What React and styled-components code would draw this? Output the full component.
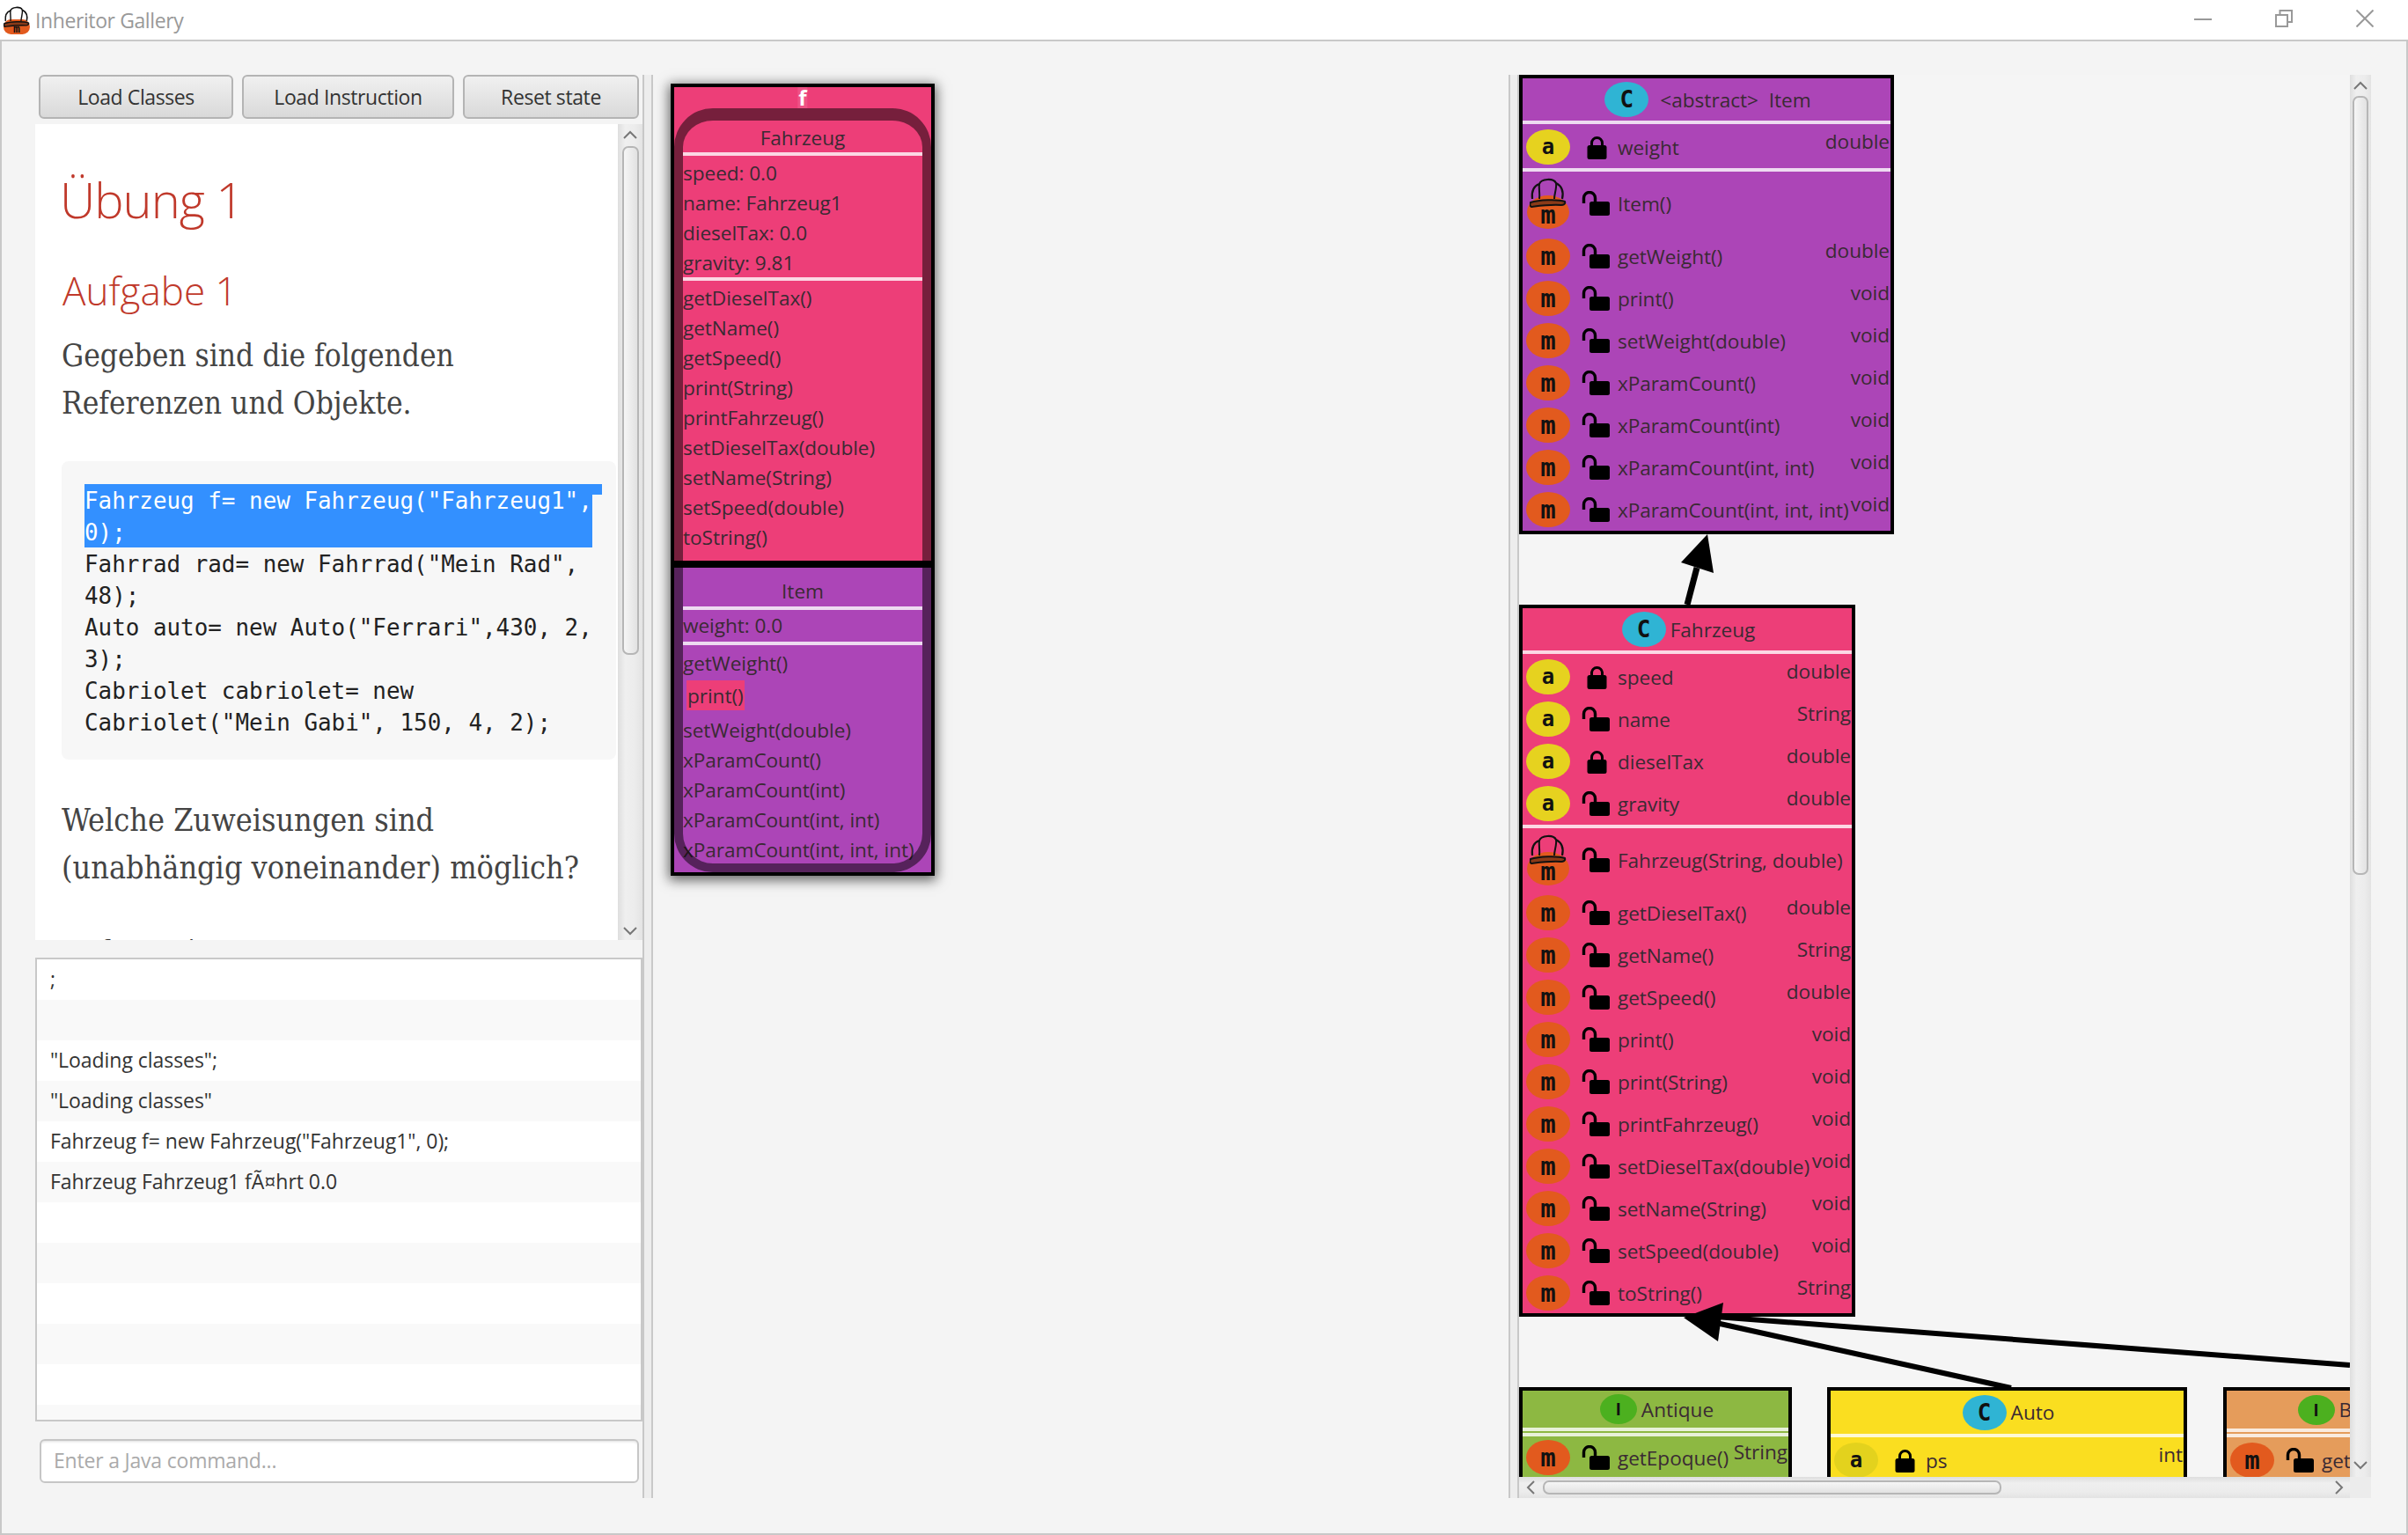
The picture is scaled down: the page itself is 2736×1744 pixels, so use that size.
import React from "react";
import styled, { createGlobalStyle } from "styled-components";

const UI = `"Open Sans", "Noto Sans", sans-serif`;

const Global = createGlobalStyle`
  html, body { margin: 0; padding: 0; background: #f4f4f4; }
  * { box-sizing: border-box; }
`;

const Win = styled.div`
  width: 2736px; height: 1744px; overflow: hidden; display: flex; flex-direction: column;
  background: #f4f4f4; font-family: ${UI}; color: #333;
`;
const TitleBar = styled.div`
  height: 47px; flex: none; background: #fff; border-bottom: 2px solid #c8c8c8;
  display: flex; align-items: center; padding-left: 4px; position: relative;
`;
const AppIcon = styled.span`
  position: relative; display: block; width: 30px; height: 30px; margin-top: 2px; flex: none;
`;
const AppIconBody = styled.span`
  position: absolute; left: 0; right: 0; bottom: 0; height: 17px; background: #e25a1e; border-radius: 9px;
  display: flex; align-items: center; justify-content: center;
  font: bold 13px "DejaVu Sans Mono", monospace; color: #111; padding-top: 4px;
`;
const AppHat = styled.svg`
  position: absolute; left: 0; top: -2px; width: 30px; height: 24px;
`;
const TitleText = styled.span`
  margin-left: 6px; font-size: 23px; color: #999; letter-spacing: -0.4px; line-height: 1; margin-top: 1px;
`;
const WinButtons = styled.div`
  margin-left: auto; display: flex; align-items: center; gap: 72px; padding-right: 39px; height: 100%;
`;
const WinIcon = styled.svg`
  width: 20px; height: 20px; display: block; fill: none; stroke: #999; stroke-width: 2; margin-top: -3px;
`;

const Main = styled.div`
  flex: 1; display: flex; background: #f4f4f4; border: solid #c8c8c8; border-width: 0 2px 2px 2px;
  padding: 38px 40px 40px 38px;
`;
const LeftCol = styled.div`
  width: 690px; flex: none; display: flex; flex-direction: column;
`;
const Buttons = styled.div`
  display: flex; gap: 10px; padding: 0 4px 0 4px; height: 50px; flex: none;
`;
const Btn = styled.button`
  width: ${p => p.$w}px; height: 50px; flex: none; border: 2px solid #b4b4b4; border-radius: 6px;
  background: linear-gradient(#f0f0f0, #d9d9d9); font-family: ${UI}; font-size: 23px; color: #333;
  letter-spacing: -0.4px; padding: 0;
`;
const WebWrap = styled.div`
  margin-top: 6px; height: 927px; flex: none; display: flex; background: #fff; overflow: hidden;
`;
const Doc = styled.div`
  flex: 1; min-width: 0; padding: 0 2px 0 31px; overflow: hidden;
`;
const H1 = styled.h1`
  margin: 0 0 0 -3px; padding-top: 41px; font-weight: 300; font-size: 56px; line-height: 88px; letter-spacing: -1px; color: #c0392b; font-family: ${UI};
`;
const H2 = styled.h2`
  margin: 0; padding-top: 28px; font-weight: 300; font-size: 44px; line-height: 64px; color: #c0392b; font-family: ${UI};
`;
const Para = styled.p`
  margin: ${p => p.$mt}px 0 0 -1px; font-family: "DejaVu Serif Condensed", "DejaVu Serif", serif;
  font-size: ${p => p.$fs}px; line-height: 54px; color: #444;
`;
const CodeBlock = styled.div`
  margin: 39px 0 0 -1px; background: #f7f7f7; border-radius: 8px; padding: 26px 0 25px 26px; width: 630px;
`;
const CodeLine = styled.div`
  font: 25.9px/38px "DejaVu Sans Mono", monospace; color: #222; white-space: nowrap; height: 36px;
`;
const SelBlock = styled.div`
  position: relative; width: 577px; background: #3390ff; color: #fff;
  &::before { content: ""; position: absolute; left: 100%; top: 0; width: 11px; height: 12px; background: #3390ff; }
`;
const SelLine = styled(CodeLine)`
  color: #fff; position: relative;
`;
const ClipText = styled.div`
  margin-top: 47px; font: 25.9px/36px "DejaVu Sans Mono", monospace; color: #333; padding-left: 41px; white-space: pre;
`;

const VBar = styled.div`
  width: ${p => p.$w}px; flex: none; position: relative;
  background: linear-gradient(90deg, #dedede, #efefef 30%, #ececec 70%, #e3e3e3);
`;
const VThumb = styled.div`
  position: absolute; left: ${p => p.$l}px; width: ${p => p.$tw}px; top: ${p => p.$top}px; height: ${p => p.$h}px;
  border: 2px solid #b6b6b6; border-radius: 7px; background: linear-gradient(90deg, #f6f6f6, #e2e2e2);
`;
const ChevV = styled.svg`
  position: absolute; left: ${p => p.$l}px; top: ${p => p.$top}px; width: 16px; height: 10px;
  fill: none; stroke: #777; stroke-width: 2;
`;
const Console = styled.div`
  margin-top: 20px; height: 527px; flex: none; border: 2px solid #c8c8c8; background: #fff; overflow: hidden;
`;
const ConsoleRow = styled.div`
  height: 46px; padding: 0 0 2px 15px; display: flex; align-items: center; font-size: 23px; letter-spacing: -0.05px;
  color: #333; background: ${p => (p.$alt ? "#f9f9f9" : "#fff")}; white-space: nowrap;
`;
const Input = styled.input`
  margin: 20px 4px 0 5px; height: 50px; flex: none; border: 2px solid #c6c6c6; border-radius: 6px;
  box-shadow: inset 0 3px 3px -2px #ddd; background: #fff; padding: 0 14px 2px; font-family: ${UI}; font-size: 23px;
  letter-spacing: -0.2px;
  &::placeholder { color: #aaa; opacity: 1; }
`;

const Split = styled.div`
  width: 12px; flex: none; border: solid #c8c8c8; border-width: 0 2px; background: #ededed; height: 1617px;
`;

const Center = styled.div`
  width: 972px; flex: none; padding: 10px 0 0 20px;
`;
const ObjBox = styled.div`
  position: relative; width: 300px; height: 900px; border: 4px solid #000; background: #000;
  box-shadow: 0 3px 13px 2px rgba(0,0,0,.6); display: flex; flex-direction: column; gap: 8px;
`;
const ObjSection = styled.div`
  background: ${p => p.$c}; height: ${p => p.$h}px; flex: none; padding: ${p => p.$pt}px 10px 0;
`;
const ObjName = styled.div`
  position: absolute; top: 0; left: 50%; transform: translateX(-50%); font-size: 24px; line-height: 24px; font-weight: 700; color: #fff;
  background: rgba(255,255,255,.1); padding: 0 1px; z-index: 3;
`;
const Frame = styled.div`
  position: absolute; left: 0; right: 0; top: 24px; bottom: 0; border: solid rgba(0,0,0,.5);
  border-width: 14px 10px 10px; border-radius: 44px 44px 44px 44px; z-index: 1; pointer-events: none;
`;
const SepBar = styled.div`
  position: absolute; left: 0; right: 0; top: 538px; height: 8px; background: #000; z-index: 2;
`;
const ObjTitle = styled.div`
  height: ${p => p.$h}px; text-align: center; font-size: 22.6px; line-height: ${p => p.$h + p.$adj}px; color: #3a2a33;
`;
const ObjLine = styled.div`
  height: 4px; background: rgba(255,255,255,.8);
`;
const ObjRows = styled.div`
  padding-top: ${p => p.$pt}px;
`;
const ObjRow = styled.div`
  height: 34px; line-height: 35px; font-size: 22.6px; letter-spacing: -0.05px; color: #3a2a33; white-space: nowrap; position: relative;
`;
const Hi = styled.span`
  display: inline-block; margin: 3px 0 5px 4px; padding: 0 1px; height: 34px; background: #ed3e78; line-height: 35px;
  font-size: 22.6px; letter-spacing: -0.05px; color: #3a2a33;
`;

const RightWrap = styled.div`
  flex: none; display: flex; height: 1617px;
`;
const CanvasCol = styled.div`
  width: 944px; display: flex; flex-direction: column; flex: none;
`;
const Canvas = styled.div`
  position: relative; height: 1593px; overflow: hidden; background: #f5f5f5; flex: none;
`;
const ArrowLayer = styled.svg`
  position: absolute; left: 0; top: 0; width: 944px; height: 1593px; z-index: 5;
`;
const HBar = styled.div`
  height: 24px; flex: none; position: relative; background: linear-gradient(#dedede, #efefef 30%, #ececec 70%, #e3e3e3);
`;
const HThumb = styled.div`
  position: absolute; left: 27px; width: 521px; top: 4px; height: 16px; border: 2px solid #b6b6b6; border-radius: 7px;
  background: linear-gradient(#f6f6f6, #e2e2e2);
`;
const ChevH = styled.svg`
  position: absolute; left: ${p => p.$l}px; top: 4px; width: 10px; height: 16px; fill: none; stroke: #777; stroke-width: 2;
`;
const SideCol = styled.div`
  width: 24px; flex: none; display: flex; flex-direction: column; height: 1617px;
`;
const Corner = styled.div`
  height: 24px; flex: none; background: #ececec;
`;

const ClassBox = styled.div`
  position: absolute; left: ${p => p.$x}px; top: ${p => p.$y}px; width: ${p => p.$w}px; height: ${p => p.$h}px;
  border: 4px solid #000; background: ${p => p.$c}; overflow: hidden;
`;
const ClassHead = styled.div`
  height: ${p => p.$h}px; display: flex; justify-content: center; align-items: center; gap: ${p => p.$gap}px;
  font-size: 22.6px; color: #3a2a33; white-space: pre; padding-left: 3px; padding-right: ${p => p.$pr || 0}px;
`;
const Line = styled.div`
  height: 4px; margin-top: ${p => p.$mt || 0}px; background: rgba(255,255,255,.8);
`;
const Pad = styled.div`
  height: ${p => p.$h}px;
`;
const Row = styled.div`
  height: ${p => p.$h || 48}px; display: flex; align-items: center; padding-left: 4px; white-space: nowrap; position: relative;
`;
const Badge = styled.span`
  width: ${p => p.$w || 50}px; height: ${p => p.$ht || 40}px; border-radius: 50%; flex: none; background: ${p => p.$c};
  display: flex; align-items: center; justify-content: center; color: #111;
  font: bold ${p => p.$fs || 29}px/1 ${p => p.$font || `"DejaVu Sans Mono", monospace`};
`;
const CtorWrap = styled.span`
  position: relative; width: 50px; height: 58px; flex: none; display: flex; align-items: flex-end; justify-content: center;
`;
const CtorM = styled(Badge)`
  padding-top: 6px;
`;
const CtorHat = styled.svg`
  position: absolute; left: 4px; top: 0; width: 42px; height: 34px;
`;
const LockSlot = styled.span`
  width: 32px; margin-left: 13px; flex: none; display: flex; align-items: center;
`;
const RowName = styled.span`
  margin-left: 9px; font-size: 22.6px; letter-spacing: -0.05px; color: #3a2a33;
`;
const RowType = styled.span`
  margin-left: auto; margin-right: 1px; margin-top: -14px; font-size: 22.6px; letter-spacing: -0.05px; color: #3a2a33;
`;
const ClosedLockSvg = styled.svg`
  display: block; width: 23px; height: 27px; margin-left: 6px;
`;
const OpenLockSvg = styled.svg`
  display: block; width: 32px; height: 28px;
`;

const HatGlyph = () => (
  <>
    <path d="M3 24C2 15 5 9 11 7C13 1 27 0 30 6C36 9 39 15 37 24" fill="none" stroke="#111" strokeWidth="2.2" />
    <path d="M11 7C10 12 12 18 11 24M30 6C31 12 28 18 28 24" fill="none" stroke="#111" strokeWidth="2" />
    <path d="M1 28C10 25 32 24 40 27C41 30 38 31 36 31C24 30 10 32 2 33C0 32 0 30 1 28Z" fill="#8a3a18" stroke="#111" strokeWidth="2" />
  </>
);
const LockC = () => (
  <ClosedLockSvg viewBox="0 0 23 27">
    <path d="M5.5 13V8.5a6 6 0 0 1 12 0V13" fill="none" stroke="#000" strokeWidth="3" />
    <rect x="0.5" y="11" width="22" height="16" rx="2.5" fill="#000" />
  </ClosedLockSvg>
);
const LockO = () => (
  <OpenLockSvg viewBox="0 0 32 28">
    <path d="M2.5 14V8a6.5 6.5 0 0 1 13 0V15" fill="none" stroke="#000" strokeWidth="3.4" />
    <rect x="9" y="12" width="23" height="16" rx="2.5" fill="#000" />
  </OpenLockSvg>
);

const ORANGE = "#e25a1e", YEL = "#e6d21f", BLUE = "#2fb4d4", GREEN = "#4cb01f";
const SANS = `"Liberation Sans", sans-serif`;

const Member = ({ kind = "m", open = true, name, type, yc }) => (
  <Row>
    <Badge $c={kind === "a" ? yc || YEL : ORANGE} $fs={kind === "a" ? 24 : 29}>{kind}</Badge>
    <LockSlot>{open ? <LockO /> : <LockC />}</LockSlot>
    <RowName>{name}</RowName>
    {type && <RowType>{type}</RowType>}
  </Row>
);
const Ctor = ({ name }) => (
  <Row $h={72}>
    <CtorWrap>
      <CtorM $c={ORANGE} $w={48} $ht={38} $fs={29}>m</CtorM>
      <CtorHat viewBox="0 0 42 34"><HatGlyph /></CtorHat>
    </CtorWrap>
    <LockSlot><LockO /></LockSlot>
    <RowName>{name}</RowName>
  </Row>
);

const itemMethods = [
  ["getWeight()", "double"], ["print()", "void"], ["setWeight(double)", "void"], ["xParamCount()", "void"],
  ["xParamCount(int)", "void"], ["xParamCount(int, int)", "void"], ["xParamCount(int, int, int)", "void"],
];
const fzAttrs = [["speed", false, "double"], ["name", true, "String"], ["dieselTax", false, "double"], ["gravity", true, "double"]];
const fzMethods = [
  ["getDieselTax()", "double"], ["getName()", "String"], ["getSpeed()", "double"], ["print()", "void"], ["print(String)", "void"],
  ["printFahrzeug()", "void"], ["setDieselTax(double)", "void"], ["setName(String)", "void"], ["setSpeed(double)", "void"], ["toString()", "String"],
];
const objFields = ["speed: 0.0", "name: Fahrzeug1", "dieselTax: 0.0", "gravity: 9.81"];
const objMethods = ["getDieselTax()", "getName()", "getSpeed()", "print(String)", "printFahrzeug()", "setDieselTax(double)", "setName(String)", "setSpeed(double)", "toString()"];
const itemObj = ["setWeight(double)", "xParamCount()", "xParamCount(int)", "xParamCount(int, int)", "xParamCount(int, int, int)"];
const consoleRows = [";", "", "\"Loading classes\";", "\"Loading classes\"", "Fahrzeug f= new Fahrzeug(\"Fahrzeug1\", 0);", "Fahrzeug Fahrzeug1 fÃ¤hrt 0.0", "", "", "", "", "", ""];

export default function App() {
  return (
    <Win>
      <Global />
      <TitleBar>
        <AppIcon>
          <AppIconBody>m</AppIconBody>
          <AppHat viewBox="0 0 42 34"><HatGlyph /></AppHat>
        </AppIcon>
        <TitleText>Inheritor Gallery</TitleText>
        <WinButtons>
          <WinIcon viewBox="0 0 20 20"><path d="M0 11H20" /></WinIcon>
          <WinIcon viewBox="0 0 20 20"><path d="M1 6H14V19H1ZM5.5 6V1H19V14H14" /></WinIcon>
          <WinIcon viewBox="0 0 20 20"><path d="M0.5 0.5L19.5 19.5M19.5 0.5L0.5 19.5" /></WinIcon>
        </WinButtons>
      </TitleBar>
      <Main>
        <LeftCol>
          <Buttons>
            <Btn $w={221}>Load Classes</Btn>
            <Btn $w={241}>Load Instruction</Btn>
            <Btn $w={200}>Reset state</Btn>
          </Buttons>
          <WebWrap>
            <Doc>
              <H1>Übung 1</H1>
              <H2>Aufgabe 1</H2>
              <Para $mt={15} $fs={35}>Gegeben sind die folgenden<br />Referenzen und Objekte.</Para>
              <CodeBlock>
                <SelBlock>
                  <SelLine>Fahrzeug f= new Fahrzeug("Fahrzeug1",</SelLine>
                  <SelLine>0);</SelLine>
                </SelBlock>
                <CodeLine>Fahrrad rad= new Fahrrad("Mein Rad",</CodeLine>
                <CodeLine>48);</CodeLine>
                <CodeLine>Auto auto= new Auto("Ferrari",430, 2,</CodeLine>
                <CodeLine>3);</CodeLine>
                <CodeLine>Cabriolet cabriolet= new</CodeLine>
                <CodeLine>Cabriolet("Mein Gabi", 150, 4, 2);</CodeLine>
              </CodeBlock>
              <Para $mt={42} $fs={35.7}>Welche Zuweisungen sind<br />(unabhängig voneinander) möglich?</Para>
              <ClipText>f     d</ClipText>
            </Doc>
            <VBar $w={28}>
              <ChevV $l={6} $top={7} viewBox="0 0 16 10"><path d="M1 9L8 2L15 9" /></ChevV>
              <VThumb $l={5} $tw={19} $top={25} $h={578} />
              <ChevV $l={6} $top={912} viewBox="0 0 16 10"><path d="M1 1L8 8L15 1" /></ChevV>
            </VBar>
          </WebWrap>
          <Console>
            {consoleRows.map((t, i) => <ConsoleRow key={i} $alt={i % 2 === 1}>{t}</ConsoleRow>)}
          </Console>
          <Input placeholder="Enter a Java command..." readOnly />
        </LeftCol>
        <Split />
        <Center>
          <ObjBox>
            <ObjName>f</ObjName>
            <Frame />
            <SepBar />
            <ObjSection $c="#ed3e78" $h={538} $pt={38}>
              <ObjTitle $h={36} $adj={4}>Fahrzeug</ObjTitle>
              <ObjLine />
              <ObjRows $pt={2}>{objFields.map(t => <ObjRow key={t}>{t}</ObjRow>)}</ObjRows>
              <ObjLine />
              <ObjRows $pt={2}>{objMethods.map(t => <ObjRow key={t}>{t}</ObjRow>)}</ObjRows>
            </ObjSection>
            <ObjSection $c="#ac45b7" $h={346} $pt={0}>
              <ObjTitle $h={44} $adj={10}>Item</ObjTitle>
              <ObjLine />
              <ObjRow>weight: 0.0</ObjRow>
              <Pad $h={2} />
              <ObjLine />
              <ObjRows $pt={3}>
                <ObjRow>getWeight()</ObjRow>
                <Hi>print()</Hi>
                {itemObj.map(t => <ObjRow key={t}>{t}</ObjRow>)}
              </ObjRows>
            </ObjSection>
          </ObjBox>
        </Center>
        <Split />
        <RightWrap>
          <CanvasCol>
            <Canvas>
              <ClassBox $x={0} $y={0} $w={426} $h={522} $c="#ac45b7">
                <ClassHead $h={48} $gap={13}>
                  <Badge $c={BLUE} $fs={26}>C</Badge>
                  <span>{"<abstract>  Item"}</span>
                </ClassHead>
                <Line />
                <Pad $h={2} />
                <Member kind="a" open={false} name="weight" type="double" />
                <Line />
                <Ctor name="Item()" />
                {itemMethods.map(([n, t]) => <Member key={n} name={n} type={t} />)}
              </ClassBox>
              <ClassBox $x={0} $y={602} $w={382} $h={809} $c="#ed3e78">
                <ClassHead $h={48} $gap={5}>
                  <Badge $c={BLUE} $fs={26}>C</Badge>
                  <span>Fahrzeug</span>
                </ClassHead>
                <Line />
                <Pad $h={2} />
                {fzAttrs.map(([n, o, t]) => <Member key={n} kind="a" open={o} name={n} type={t} />)}
                <Line />
                <Ctor name="Fahrzeug(String, double)" />
                {fzMethods.map(([n, t]) => <Member key={n} name={n} type={t} />)}
              </ClassBox>
              <ClassBox $x={0} $y={1491} $w={310} $h={200} $c="#8db842">
                <ClassHead $h={42} $gap={5}>
                  <Badge $c={GREEN} $w={42} $ht={34} $fs={20} $font={SANS}>I</Badge>
                  <span>Antique</span>
                </ClassHead>
                <Line />
                <Line $mt={2} />
                <Member name="getEpoque()" type="String" />
              </ClassBox>
              <ClassBox $x={350} $y={1491} $w={409} $h={200} $c="#fade20">
                <ClassHead $h={49} $gap={5}>
                  <Badge $c={BLUE} $fs={26}>C</Badge>
                  <span>Auto</span>
                </ClassHead>
                <Line />
                <Pad $h={2} />
                <Member kind="a" open={false} name="ps" type="int" yc="#e3d21d" />
              </ClassBox>
              <ClassBox $x={800} $y={1491} $w={300} $h={200} $c="#e59c5b">
                <ClassHead $h={43} $gap={5} $pr={42}>
                  <Badge $c={GREEN} $w={42} $ht={34} $fs={20} $font={SANS}>I</Badge>
                  <span>Bike</span>
                </ClassHead>
                <Line />
                <Line $mt={2} />
                <Pad $h={2} />
                <Member name="getBike()" type="String" />
              </ClassBox>
              <ArrowLayer viewBox="1726 85 944 1593">
                <path d="M1917 687L1928 645" stroke="#000" strokeWidth="7" fill="none" />
                <path d="M1940 607L1947 651L1910 639Z" fill="#000" />
                <path d="M1950 1496L2670 1551" stroke="#000" strokeWidth="6" fill="none" />
                <path d="M1950 1503L2285 1577" stroke="#000" strokeWidth="6" fill="none" />
                <path d="M1913 1497L1958 1480L1952 1524Z" fill="#000" />
              </ArrowLayer>
            </Canvas>
            <HBar>
              <ChevH $l={8} viewBox="0 0 10 16"><path d="M9 1L2 8L9 15" /></ChevH>
              <HThumb />
              <ChevH $l={927} viewBox="0 0 10 16"><path d="M1 1L8 8L1 15" /></ChevH>
            </HBar>
          </CanvasCol>
          <SideCol>
            <VBar $w={24} style={{ flex: 1 }}>
              <ChevV $l={4} $top={7} viewBox="0 0 16 10"><path d="M1 9L8 2L15 9" /></ChevV>
              <VThumb $l={3} $tw={18} $top={24} $h={885} />
              <ChevV $l={4} $top={1575} viewBox="0 0 16 10"><path d="M1 1L8 8L15 1" /></ChevV>
            </VBar>
            <Corner />
          </SideCol>
        </RightWrap>
      </Main>
    </Win>
  );
}
